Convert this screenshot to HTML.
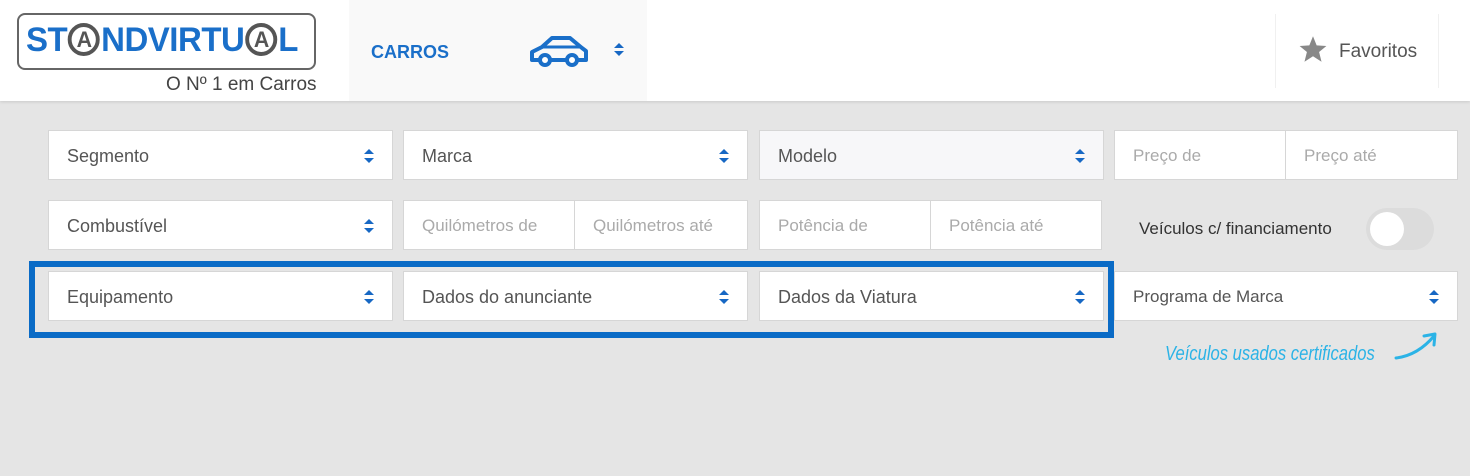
<!DOCTYPE html>
<html><head><style>
*{box-sizing:border-box;margin:0;padding:0}
body{width:1470px;height:476px;background:#e5e5e5;font-family:"Liberation Sans",sans-serif;position:relative;overflow:hidden}
.hdr{position:absolute;left:0;top:0;width:1470px;height:101px;background:#fff;box-shadow:0 1px 3px rgba(0,0,0,.12)}
.tab{position:absolute;left:349px;top:0;width:298px;height:101px;background:#f9f9f9}
.f{position:absolute;height:50px;background:#fff;border:1px solid #d6d6d6;font-size:18px;color:#555;padding-left:18px;line-height:50px}
.f.ph{color:#aaa;font-size:17px}
.ar{position:absolute;right:18px;top:18px;width:10px;height:14px}
.ar:before,.ar:after{content:"";position:absolute;left:0;border-left:5px solid transparent;border-right:5px solid transparent}
.ar:before{top:0;border-bottom:5px solid #1768c4}
.ar:after{bottom:0;border-top:5px solid #1768c4}
.o{display:inline-block;width:33px;height:33px;border:4px solid #555;border-radius:50%;font-size:22px;line-height:25px;text-align:center;color:#555;vertical-align:top;margin:3px 1px 0}
</style></head><body>
<div class="hdr"></div>
<div class="tab"></div>
<div style="position:absolute;left:17px;top:13px;width:299px;height:57px;border:2px solid #666;border-radius:8px"></div>
<div style="position:absolute;left:26px;top:20px;height:40px;line-height:40px;font-size:34px;font-weight:bold;color:#1a6fc9;letter-spacing:-0.5px;white-space:nowrap;transform:scaleX(.97);transform-origin:left">ST<span class="o">A</span>NDVIRTU<span class="o">A</span>L</div>
<div style="position:absolute;left:166px;top:74px;font-size:19px;color:#444">O Nº 1 em Carros</div>
<div style="position:absolute;left:371px;top:42px;font-size:18px;font-weight:bold;color:#1a6fc9">CARROS</div>
<svg style="position:absolute;left:528px;top:34px" width="62" height="34" viewBox="0 0 62 34"><path d="M4 26 V18 L14 13 L24 4 H42 L54 14 L58 17 V26 H50 M38 26 H22 M12 26 H4 Z" fill="none" stroke="#1a6fc9" stroke-width="4" stroke-linejoin="round"/><path d="M14 13 H54" stroke="#1a6fc9" stroke-width="3"/><circle cx="17" cy="26" r="5" fill="#fff" stroke="#1a6fc9" stroke-width="4"/><circle cx="44" cy="26" r="5" fill="#fff" stroke="#1a6fc9" stroke-width="4"/></svg>
<div class="ar" style="left:614px;top:43px;width:10px;height:13px"></div>
<div style="position:absolute;left:1275px;top:14px;width:1px;height:74px;background:#f0f0f0"></div>
<div style="position:absolute;left:1438px;top:14px;width:1px;height:74px;background:#f0f0f0"></div>
<svg style="position:absolute;left:1298px;top:35px" width="30" height="28" viewBox="0 0 24 23"><path d="M12 1 L15 8.5 L23 9 L17 14 L19 22 L12 17.5 L5 22 L7 14 L1 9 L9 8.5 Z" fill="#888"/></svg>
<div style="position:absolute;left:1339px;top:41px;font-size:19px;color:#555">Favoritos</div>

<div class="f" style="left:48px;top:130px;width:345px">Segmento<i class="ar"></i></div>
<div class="f" style="left:403px;top:130px;width:345px">Marca<i class="ar"></i></div>
<div class="f" style="left:759px;top:130px;width:345px;background:#f7f7f9">Modelo<i class="ar"></i></div>
<div class="f ph" style="left:1114px;top:130px;width:172px">Preço de</div>
<div class="f ph" style="left:1285px;top:130px;width:173px">Preço até</div>

<div class="f" style="left:48px;top:200px;width:345px">Combustível<i class="ar"></i></div>
<div class="f ph" style="left:403px;top:200px;width:172px">Quilómetros de</div>
<div class="f ph" style="left:574px;top:200px;width:174px">Quilómetros até</div>
<div class="f ph" style="left:759px;top:200px;width:172px">Potência de</div>
<div class="f ph" style="left:930px;top:200px;width:172px">Potência até</div>
<div style="position:absolute;left:1139px;top:219px;font-size:17px;color:#333">Veículos c/ financiamento</div>
<div style="position:absolute;left:1366px;top:208px;width:68px;height:42px;border-radius:21px;background:#dcdcdc"></div>
<div style="position:absolute;left:1370px;top:212px;width:34px;height:34px;border-radius:50%;background:#fff"></div>

<div style="position:absolute;left:29px;top:261px;width:1085px;height:77px;border:6px solid #0a6bc6"></div>
<div class="f" style="left:48px;top:271px;width:345px">Equipamento<i class="ar"></i></div>
<div class="f" style="left:403px;top:271px;width:345px">Dados do anunciante<i class="ar"></i></div>
<div class="f" style="left:759px;top:271px;width:345px">Dados da Viatura<i class="ar"></i></div>
<div class="f" style="left:1114px;top:271px;width:344px;font-size:17px">Programa de Marca<i class="ar"></i></div>
<div style="position:absolute;left:1165px;top:343px;font-size:20px;color:#2bb3e6;font-style:italic;white-space:nowrap;transform:scaleX(.83);transform-origin:left">Veículos usados certificados</div>
<svg style="position:absolute;left:1392px;top:330px" width="50" height="34"><path d="M4 28 C20 26 32 18 42 6" fill="none" stroke="#2bb3e6" stroke-width="3" stroke-linecap="round"/><path d="M32 6 L43 4 L42 15" fill="none" stroke="#2bb3e6" stroke-width="3" stroke-linecap="round" stroke-linejoin="round"/></svg>
</body></html>
